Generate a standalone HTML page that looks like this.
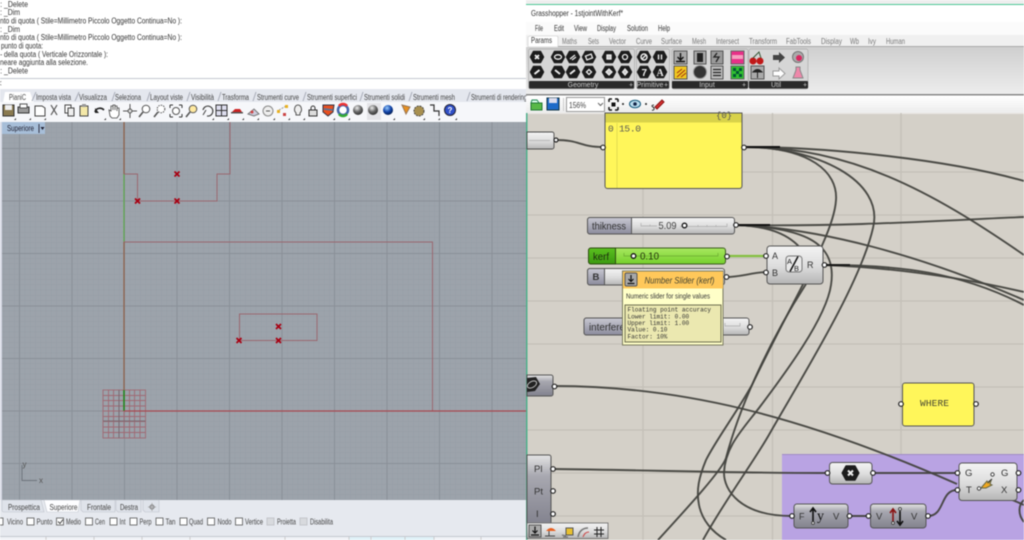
<!DOCTYPE html>
<html><head><meta charset="utf-8"><style>
html,body{margin:0;padding:0;width:1024px;height:540px;overflow:hidden;background:#fff}
svg{display:block;position:absolute;left:0;top:0;filter:blur(.45px)}
text{font-family:"Liberation Sans",sans-serif}
.c{font-size:8px;fill:#333}.t{font-size:8px;fill:#444}.m{font-family:"Liberation Mono",monospace;fill:#333}
.w{fill:none;stroke:#43433f;stroke-width:1.9;stroke-opacity:.95}
.p{fill:#fff;stroke:#222;stroke-width:1.2}
.n{stroke:#4a4a4a;stroke-width:.9}
.r{fill:none;stroke:#9a6870;stroke-width:1}
.g{font-size:10.5px;fill:#333}
</style></head><body>
<svg width="1024" height="540" viewBox="0 0 1024 540" xmlns="http://www.w3.org/2000/svg">
<defs>
<linearGradient id="cg" x1="0" y1="0" x2="0" y2="1"><stop offset="0" stop-color="#f4f4f4"/><stop offset=".55" stop-color="#dcdcdc"/><stop offset="1" stop-color="#b5b5b5"/></linearGradient>
<linearGradient id="dg" x1="0" y1="0" x2="0" y2="1"><stop offset="0" stop-color="#e4e4e4"/><stop offset=".3" stop-color="#a8a8b0"/><stop offset="1" stop-color="#82828e"/></linearGradient>
<linearGradient id="lg" x1="0" y1="0" x2="0" y2="1"><stop offset="0" stop-color="#c8c8d2"/><stop offset="1" stop-color="#8c8c9c"/></linearGradient>
<linearGradient id="gg" x1="0" y1="0" x2="0" y2="1"><stop offset="0" stop-color="#a8e860"/><stop offset="1" stop-color="#76d02c"/></linearGradient>
<linearGradient id="gd" x1="0" y1="0" x2="0" y2="1"><stop offset="0" stop-color="#5cc020"/><stop offset="1" stop-color="#3c9a10"/></linearGradient>
<linearGradient id="pal" x1="0" y1="0" x2="0" y2="1"><stop offset="0" stop-color="#cfcfcf"/><stop offset="1" stop-color="#ededed"/></linearGradient>
<linearGradient id="tb" x1="0" y1="0" x2="0" y2="1"><stop offset="0" stop-color="#fff"/><stop offset="1" stop-color="#ececec"/></linearGradient>
<radialGradient id="sph" cx=".4" cy=".3" r=".8"><stop offset="0" stop-color="#eee"/><stop offset=".5" stop-color="#666"/><stop offset="1" stop-color="#222"/></radialGradient>
<radialGradient id="blu" cx=".4" cy=".3" r=".8"><stop offset="0" stop-color="#9cf"/><stop offset=".5" stop-color="#14a"/><stop offset="1" stop-color="#013"/></radialGradient>
<pattern id="mi" width="5.25" height="5.25" patternUnits="userSpaceOnUse" x="19.5" y="253"><path d="M0 0V5.25M0 0H5.25" stroke="#959ca4" stroke-width=".7" fill="none"/></pattern>
<pattern id="ma" width="52.5" height="52.5" patternUnits="userSpaceOnUse" x="19" y="253"><path d="M.5 0V52.5M0 .5H52.5" stroke="#8a9098" stroke-width="1" fill="none"/></pattern>
<g id="hx"><polygon points="-6.5,0 -3.5,-5.5 3.5,-5.5 6.5,0 3.5,5.5 -3.5,5.5" fill="#1c1c1c" stroke="#1c1c1c" stroke-width="1.4" stroke-linejoin="round"/></g>
<g id="x"><path d="M-2.5 -2.500L2.500 2.500M2.500 -2.500L-2.500 2.500" stroke="#a80012" stroke-width="1.700"/></g>
</defs>

<!-- LEFT: command area -->
<rect width="526" height="90" fill="#fff"/>
<g class="c">
<text class="c" x="-4" y="7" textLength="32" lengthAdjust="spacingAndGlyphs">&lt;: _Delete</text>
<text class="c" x="-4" y="15" textLength="24" lengthAdjust="spacingAndGlyphs">&lt;: _Dim</text>
<text class="c" x="0" y="23.5" textLength="182" lengthAdjust="spacingAndGlyphs">nto di quota ( Stile=Millimetro Piccolo  Oggetto  Continua=No ):</text>
<text class="c" x="-4" y="32" textLength="24" lengthAdjust="spacingAndGlyphs">&lt;: _Dim</text>
<text class="c" x="0" y="40" textLength="182" lengthAdjust="spacingAndGlyphs">nto di quota ( Stile=Millimetro Piccolo  Oggetto  Continua=No ):</text>
<text class="c" x="1" y="48.5" textLength="42" lengthAdjust="spacingAndGlyphs">punto di quota:</text>
<text class="c" x="0" y="57" textLength="108" lengthAdjust="spacingAndGlyphs">- della quota ( Verticale  Orizzontale ):</text>
<text class="c" x="0" y="65" textLength="88" lengthAdjust="spacingAndGlyphs">neare aggiunta alla selezione.</text>
<text class="c" x="-4" y="73.5" textLength="32" lengthAdjust="spacingAndGlyphs">&lt;: _Delete</text>
<text class="c" x="-3" y="86">&lt;</text>
</g>
<rect y="78" width="526" height="1" fill="#c4c8d0"/>
<rect y="89" width="526" height="14" fill="#e4e7ee"/>
<path d="M3 103L5 92H30L34 103Z" fill="#fff"/>
<g class="t">
<text class="t" x="9" y="100" textLength="17" lengthAdjust="spacingAndGlyphs">PianiC</text>
<text class="t" x="36" y="100" textLength="35" lengthAdjust="spacingAndGlyphs">Imposta vista</text>
<text class="t" x="79" y="100" textLength="28" lengthAdjust="spacingAndGlyphs">Visualizza</text>
<text class="t" x="115" y="100" textLength="26" lengthAdjust="spacingAndGlyphs">Seleziona</text>
<text class="t" x="150" y="100" textLength="33" lengthAdjust="spacingAndGlyphs">Layout viste</text>
<text class="t" x="191" y="100" textLength="23" lengthAdjust="spacingAndGlyphs">Visibilità</text>
<text class="t" x="222" y="100" textLength="27" lengthAdjust="spacingAndGlyphs">Trasforma</text>
<text class="t" x="257" y="100" textLength="42" lengthAdjust="spacingAndGlyphs">Strumenti curve</text>
<text class="t" x="307" y="100" textLength="50" lengthAdjust="spacingAndGlyphs">Strumenti superfici</text>
<text class="t" x="364" y="100" textLength="41" lengthAdjust="spacingAndGlyphs">Strumenti solidi</text>
<text class="t" x="413" y="100" textLength="42" lengthAdjust="spacingAndGlyphs">Strumenti mesh</text>
<text class="t" x="471" y="100" textLength="56" lengthAdjust="spacingAndGlyphs">Strumenti di rendering</text>
</g>
<path d="M32 101l4-9M75 101l4-9M112 101l3-9M147 101l3-9M187 101l3-9M218 101l3-9M253 101l3-9M303 101l3-9M360 101l3-9M409 101l3-9M467 101l3-9" stroke="#a8acb8" fill="none"/>
<rect y="102" width="526" height="20" fill="#f6f7fa"/>
<!-- rhino toolbar icons -->
<g>
<rect x="3" y="105" width="11" height="11" fill="#8a7a50" stroke="#333"/><rect x="5" y="105" width="7" height="5" fill="#eee"/>
<rect x="18" y="107" width="11" height="6" fill="#999" stroke="#333"/><rect x="20" y="104" width="7" height="4" fill="#fff" stroke="#555"/>
<path d="M35 106h7l3 2v8h-10z" fill="#fff" stroke="#444"/>
<path d="M51 105l6 10M57 105l-6 10" stroke="#555" stroke-width="1.200"/>
<rect x="65" y="105" width="6" height="8" fill="#fff" stroke="#444"/><rect x="68" y="108" width="6" height="8" fill="#eee" stroke="#444"/>
<rect x="80" y="106" width="8" height="10" fill="#f4e8a8" stroke="#444"/><rect x="82" y="104" width="4" height="3" fill="#999"/>
<path d="M95 112c1-4 6-5 9-2" fill="none" stroke="#222" stroke-width="1.600"/><path d="M95 108v5h4z" fill="#222"/>
<path d="M110 116l-1-6 2 1v-5h2v4 -5h2v5 -4h2v5 -3h2v7l-2 3h-5z" fill="#fff" stroke="#444" stroke-width=".8"/>
<path d="M130 104v14M123 111h14" stroke="#555"/><circle cx="130" cy="111" r="2" fill="#ddd" stroke="#555"/>
<circle cx="146" cy="109" r="3.800" fill="#fff" stroke="#555"/><path d="M143 112l-4 5" stroke="#555" stroke-width="1.600"/>
<circle cx="161" cy="109" r="3.800" fill="#fff" stroke="#555" stroke-dasharray="1.500 1"/><path d="M158 112l-4 5" stroke="#555" stroke-width="1.600"/>
<path d="M170 105h3M170 105v3M182 105h-3M182 105v3M170 117h3M170 117v-3M182 117h-3M182 117v-3" stroke="#333" fill="none"/><circle cx="176" cy="111" r="3.500" fill="#fff" stroke="#555"/>
<circle cx="193" cy="109" r="3.800" fill="#ffe9a0" stroke="#555"/><path d="M190 112l-4 5" stroke="#555" stroke-width="1.600"/>
<path d="M203 110a5 5 0 1 1 4 6" fill="none" stroke="#444" stroke-width="1.200"/><path d="M203 115l3-5" stroke="#444"/>
<rect x="216" y="105" width="11" height="11" fill="#dde" stroke="#333"/><path d="M221.500 105v11M216 110.500h11" stroke="#333"/>
<path d="M232 112h10l-2-3h-5z" fill="#c22"/><rect x="231" y="112" width="12" height="1.500" fill="#555"/>
<path d="M248 114l6-5 5 5-5 2z" fill="#ccd" stroke="#777"/><circle cx="252" cy="112" r="1.500" fill="#c44"/>
<circle cx="268" cy="111" r="5" fill="#eee" stroke="#888"/><path d="M266 111h4" stroke="#555"/>
<path d="M279 110l7-4" stroke="#999" stroke-dasharray="2 1"/><rect x="277" y="110" width="3" height="3" fill="#e8b020"/><rect x="285" y="105" width="3" height="3" fill="#e8b020"/><rect x="283" y="113" width="3" height="3" fill="#c44"/>
<path d="M296 115v-2c-3-3-1-8 2-8s5 5 2 8v2z" fill="#eee" stroke="#555"/>
<rect x="309" y="110" width="8" height="6" fill="#ddd" stroke="#333"/><path d="M311 110v-2a2 2 0 0 1 4 0v2" fill="none" stroke="#333"/>
<path d="M323 105h11l-1 7-5 4-5-4z" fill="#e85020" stroke="#334"/><path d="M324 109l9 1" stroke="#47a" stroke-width="1.500"/>
<circle cx="343" cy="110" r="5" fill="#fff" stroke="#46a" stroke-width="2.500"/><path d="M339 106a5 5 0 0 1 8 0" stroke="#e33" stroke-width="2.500" fill="none"/><path d="M339 114a5 5 0 0 0 8 0" stroke="#3a3" stroke-width="2.500" fill="none"/>
<circle cx="358" cy="110" r="5" fill="url(#sph)"/>
<rect x="367" y="103" width="14" height="17" fill="#e4e4e8"/><circle cx="373" cy="110" r="5" fill="url(#sph)"/>
<circle cx="388" cy="110" r="5" fill="url(#blu)"/>
<path d="M402 105l8 2-4 7z" fill="#e89020" stroke="#975"/>
<circle cx="419" cy="111" r="5" fill="#a89050" stroke="#444" stroke-dasharray="2 1"/>
<path d="M430 105h4v6h5v5" fill="none" stroke="#333" stroke-width="1.200"/>
<circle cx="450" cy="110" r="5.500" fill="#3050c8" stroke="#223"/><text x="447.500" y="113" style="font-size:8px;fill:#fff;font-weight:bold">?</text>
</g>
<path d="M16 118l-2 2h2zM31 118l-2 2h2zM46 118l-2 2h2zM106 118l-2 2h2zM121 118l-2 2h2zM214 118l-2 2h2zM229 118l-2 2h2zM244 118l-2 2h2zM259 118l-2 2h2zM275 118l-2 2h2zM290 118l-2 2h2zM305 118l-2 2h2zM335 118l-2 2h2zM350 118l-2 2h2zM395 118l-2 2h2zM425 118l-2 2h2zM440 118l-2 2h2zM457 118l-2 2h2z" fill="#333"/>

<!-- viewport -->
<rect x="0" y="122" width="526" height="378" fill="#9ca3ab"/>
<rect x="0" y="122" width="526" height="378" fill="url(#mi)"/>
<rect x="0" y="122" width="526" height="378" fill="url(#ma)"/>
<rect x="0" y="122" width="2" height="378" fill="#d8dbe6"/>
<rect x="2" y="122" width="43" height="12" fill="#a7bed8"/>
<text x="7" y="131" textLength="27" lengthAdjust="spacingAndGlyphs" style="font-size:8px;fill:#223">Superiore</text>
<rect x="38.500" y="124" width="1" height="9" fill="#334"/><path d="M40.500 127h4l-2 3z" fill="#223"/>
<!-- model -->
<path d="M124 174V242" stroke="#5ca84c" stroke-width="1.200" fill="none"/>
<path d="M124 122V174" stroke="#8f6048" stroke-width="1.200" fill="none"/>
<path class="r" d="M124 174H137.500V201H217V174H230V122"/>
<rect x="124" y="242" width="308.500" height="169" class="r"/>
<path d="M124 242V411" stroke="#8f6048" stroke-width="1.200"/>
<path class="r" d="M239.500 340.500V314H317V340.500Z" stroke-width="1.200"/>
<g stroke="#a06a74" fill="none" stroke-width=".9">
<rect x="103" y="390" width="42.500" height="48"/>
<path d="M108.500 390v48M113.500 390v48M119 390v48M124 390v48M129.500 390v48M134.500 390v48M140 390v48M103 395.500h42.500M103 400.500h42.500M103 406h42.500M103 411h42.500M103 416.500h42.500M103 421.500h42.500M103 427h42.500M103 432.500h42.500"/>
</g>
<path d="M119 390v48M103 421h42.500" stroke="#7a6870" stroke-width="1" fill="none"/>
<path d="M124 390V411" stroke="#1c8a1c" stroke-width="1.500"/>
<path d="M124 411H526" stroke="#a84850" stroke-width="1.200"/>
<use href="#x" x="177" y="174"/><use href="#x" x="137.500" y="201"/><use href="#x" x="177" y="201"/>
<use href="#x" x="278.500" y="326.500"/><use href="#x" x="239" y="340.500"/><use href="#x" x="278.500" y="340.500"/>
<path d="M22 465V480.500H37" stroke="#6e747c" fill="none"/>
<text x="22.500" y="467" style="font-size:8px;fill:#555">y</text><text x="39" y="483" style="font-size:8px;fill:#555">x</text>

<!-- bottom tabs + osnaps -->
<rect y="500" width="526" height="40" fill="#e6e9ef"/>
<path d="M2 500v10q0 2 2 2H40l4 0 -3-12z" fill="#dfe3ea" stroke="#c0c4cc" stroke-width=".6"/>
<path d="M44 500l3 12H78l2-12z" fill="#fdfdff" stroke="#c4c8d0" stroke-width=".6"/>
<path d="M81 500v10l2 2h32v-12zM116 500v10l2 2h23v-12zM143 500v10l2 2h14v-12z" fill="#dfe3ea" stroke="#c0c4cc" stroke-width=".6"/>
<g style="font-size:8px">
<text class="t" x="8" y="510" textLength="32" lengthAdjust="spacingAndGlyphs">Prospettica</text>
<text class="t" x="49.500" y="510" textLength="28" lengthAdjust="spacingAndGlyphs">Superiore</text>
<text class="t" x="87" y="510" textLength="24" lengthAdjust="spacingAndGlyphs">Frontale</text>
<text class="t" x="120" y="510" textLength="18" lengthAdjust="spacingAndGlyphs">Destra</text>
</g>
<circle cx="152" cy="507" r="2" fill="none" stroke="#777"/><path d="M152 503v8M148 507h8" stroke="#999" stroke-width=".7"/>
<g fill="#fff" stroke="#555" stroke-width=".8">
<rect x="-4" y="518" width="7" height="7"/><rect x="27" y="518" width="7" height="7"/><rect x="56.500" y="518" width="7" height="7"/><rect x="85.500" y="518" width="7" height="7"/><rect x="110" y="518" width="7" height="7"/><rect x="130" y="518" width="7" height="7"/><rect x="156" y="518" width="7" height="7"/><rect x="180" y="518" width="7" height="7"/><rect x="207.500" y="518" width="7" height="7"/><rect x="235.500" y="518" width="7" height="7"/>
</g>
<rect x="267" y="518" width="7" height="7" fill="#d8dade" stroke="#c4c6ca"/><rect x="300" y="518" width="7" height="7" fill="#d8dade" stroke="#c4c6ca"/>
<path d="M58 521.500l2 2 3-4" fill="none" stroke="#444"/>
<g style="font-size:8px">
<text class="t" x="7" y="524.500" textLength="16" lengthAdjust="spacingAndGlyphs">Vicino</text>
<text class="t" x="36.500" y="524.500" textLength="16" lengthAdjust="spacingAndGlyphs">Punto</text>
<text class="t" x="66" y="524.500" textLength="15" lengthAdjust="spacingAndGlyphs">Medio</text>
<text class="t" x="95" y="524.500" textLength="10" lengthAdjust="spacingAndGlyphs">Cen</text>
<text class="t" x="119.500" y="524.500" textLength="6" lengthAdjust="spacingAndGlyphs">Int</text>
<text class="t" x="139.500" y="524.500" textLength="12" lengthAdjust="spacingAndGlyphs">Perp</text>
<text class="t" x="165.500" y="524.500" textLength="10" lengthAdjust="spacingAndGlyphs">Tan</text>
<text class="t" x="189" y="524.500" textLength="14" lengthAdjust="spacingAndGlyphs">Quad</text>
<text class="t" x="217.500" y="524.500" textLength="14" lengthAdjust="spacingAndGlyphs">Nodo</text>
<text class="t" x="245" y="524.500" textLength="18" lengthAdjust="spacingAndGlyphs">Vertice</text>
<text class="t" x="277" y="524.500" textLength="19" lengthAdjust="spacingAndGlyphs">Proietta</text>
<text class="t" x="310" y="524.500" textLength="23" lengthAdjust="spacingAndGlyphs">Disabilita</text>
</g>
<rect y="536" width="526" height="1" fill="#c4c8d0"/><rect y="537" width="526" height="3" fill="#f0f2f6"/>
<rect x="349" y="537" width="22" height="3" fill="#e0f2f8"/><rect x="372" y="537" width="33" height="3" fill="#e0f2f8"/><rect x="405" y="537" width="29" height="3" fill="#e0f2f8"/>
<path d="M46 537v3M94 537v3M142 537v3M190 537v3M285 537v3M349 537v3M371 537v3M405 537v3M434 537v3M481 537v3" stroke="#ccc"/>

<!-- GH window -->
<rect x="526" y="0" width="498" height="5" fill="#eeeeee"/>
<rect x="526" y="4" width="498" height="1" fill="#4ec795"/>
<rect x="526" y="5" width="498" height="17" fill="#fff"/>
<rect x="526" y="22" width="498" height="13" fill="#fbfbfb"/>
<rect x="526" y="35" width="498" height="11" fill="#f0f0f0"/>
<text x="531" y="16" textLength="92" lengthAdjust="spacingAndGlyphs" style="font-size:8px;fill:#333">Grasshopper - 1stjointWithKerf*</text>
<g style="font-size:8px;fill:#333">
<text x="535" y="31" textLength="8" lengthAdjust="spacingAndGlyphs">File</text>
<text x="554" y="31" textLength="10" lengthAdjust="spacingAndGlyphs">Edit</text>
<text x="574" y="31" textLength="13" lengthAdjust="spacingAndGlyphs">View</text>
<text x="597" y="31" textLength="19" lengthAdjust="spacingAndGlyphs">Display</text>
<text x="627" y="31" textLength="21" lengthAdjust="spacingAndGlyphs">Solution</text>
<text x="658" y="31" textLength="12" lengthAdjust="spacingAndGlyphs">Help</text>
</g>
<path d="M528 47v-10l2-1h27l1 1v10z" fill="#fff" stroke="#ccc" stroke-width=".6"/>
<text x="531" y="43" textLength="21" lengthAdjust="spacingAndGlyphs" style="font-size:8px;fill:#333">Params</text>
<g style="font-size:8px;fill:#777">
<text x="562" y="44" textLength="15" lengthAdjust="spacingAndGlyphs">Maths</text>
<text x="588" y="44" textLength="11" lengthAdjust="spacingAndGlyphs">Sets</text>
<text x="609" y="44" textLength="17" lengthAdjust="spacingAndGlyphs">Vector</text>
<text x="636" y="44" textLength="16" lengthAdjust="spacingAndGlyphs">Curve</text>
<text x="661" y="44" textLength="21" lengthAdjust="spacingAndGlyphs">Surface</text>
<text x="692" y="44" textLength="14" lengthAdjust="spacingAndGlyphs">Mesh</text>
<text x="716" y="44" textLength="23" lengthAdjust="spacingAndGlyphs">Intersect</text>
<text x="749" y="44" textLength="28" lengthAdjust="spacingAndGlyphs">Transform</text>
<text x="786" y="44" textLength="25" lengthAdjust="spacingAndGlyphs">FabTools</text>
<text x="821" y="44" textLength="21" lengthAdjust="spacingAndGlyphs">Display</text>
<text x="850" y="44" textLength="9" lengthAdjust="spacingAndGlyphs">Wb</text>
<text x="868" y="44" textLength="8" lengthAdjust="spacingAndGlyphs">Ivy</text>
<text x="886" y="44" textLength="19" lengthAdjust="spacingAndGlyphs">Human</text>
</g>
<rect x="558" y="46" width="466" height="1" fill="#aaa"/>
<rect x="526" y="47" width="498" height="47" fill="url(#pal)"/>
<rect x="526" y="94" width="498" height="1.500" fill="#888"/>
<rect x="526" y="96" width="498" height="17" fill="url(#tb)"/>
<!-- palette groups -->
<g fill="#d6d6d6" stroke="#aaa" stroke-width=".7">
<rect x="528.500" y="49" width="106" height="40" rx="2"/><rect x="636.500" y="49" width="33" height="40" rx="2"/><rect x="672" y="49" width="76" height="40" rx="2"/><rect x="749" y="49" width="59" height="40" rx="2"/>
</g>
<g fill="#2a2a2a"><rect x="529" y="81" width="105" height="7.500" rx="1"/><rect x="637" y="81" width="32" height="7.500" rx="1"/><rect x="672" y="81" width="76" height="7.500" rx="1"/><rect x="749" y="81" width="59" height="7.500" rx="1"/></g>
<g style="font-size:7px;fill:#ccc" text-anchor="middle">
<text x="583" y="87">Geometry</text><text x="650" y="87">Primitive</text><text x="707" y="87">Input</text><text x="776" y="87">Util</text>
<text x="631" y="87">+</text><text x="666" y="87">+</text><text x="744" y="87">+</text><text x="805" y="87">+</text>
</g>
<g>
<use href="#hx" x="537" y="57"/><use href="#hx" x="537" y="72"/>
<use href="#hx" x="558" y="57"/><use href="#hx" x="558" y="72"/><use href="#hx" x="573" y="57"/><use href="#hx" x="573" y="72"/><use href="#hx" x="589" y="57"/><use href="#hx" x="589" y="72"/>
<use href="#hx" x="609" y="57"/><use href="#hx" x="609" y="72"/><use href="#hx" x="625" y="57"/><use href="#hx" x="625" y="72"/>
<use href="#hx" x="644" y="57"/><use href="#hx" x="644" y="72"/><use href="#hx" x="660" y="57"/><use href="#hx" x="660" y="72"/>
</g>
<g fill="none" stroke="#eee" stroke-width="1.300">
<path d="M535 55l4 4M539 55l-4 4" stroke-width="1.800"/><path d="M534.500 74l5-4" stroke-width="2"/>
<ellipse cx="558" cy="57" rx="3.500" ry="2.200"/><path d="M555 70l5 4" stroke-width="1.800"/>
<path d="M570 59l5-4M572 60l4-3"/><path d="M570 74l5-4" stroke-width="1.800"/>
<rect x="586" y="55" width="6" height="4" transform="rotate(-20 589 57)"/><path d="M586.500 72l2.500-2.500 2.500 2.500-2.500 2.500z"/>
<rect x="607" y="55" width="4" height="4" fill="#ccc"/><path d="M606 72l3-3 3 3-3 3z" fill="#ccc"/>
<circle cx="625" cy="57" r="2.500"/><path d="M622.500 72l2.500-3 2.500 3-2.500 3z" fill="#ccc"/>
<circle cx="644" cy="57" r="3" stroke-width="1.500"/><path d="M642 59l4-4"/>
<path d="M658.500 54.500v5M661.500 54.500v5" stroke-width="1.400"/>
</g>
<text x="641.500" y="76" style="font-size:10px;fill:#eee;font-weight:bold">7</text>
<text x="656.500" y="76" style="font-size:10px;fill:#eee;font-weight:bold;font-family:'Liberation Serif',serif">A</text>
<!-- input icons -->
<rect x="674" y="51" width="13" height="13" fill="#aaa" stroke="#555"/><path d="M680.500 53v6M677.500 57l3 3 3-3M676 61.500h9" stroke="#111" stroke-width="1.400" fill="none"/>
<rect x="674" y="66" width="13" height="13" fill="#f0c820" stroke="#555"/><path d="M677 77l8-7M677 73l5-4M681 77l5-4" stroke="#a03010" fill="none"/>
<rect x="694" y="51" width="12" height="13" fill="#aaa" stroke="#555"/><rect x="697" y="53" width="6" height="9" fill="#222"/>
<rect x="711" y="51" width="12" height="13" fill="#999" stroke="#555"/><path d="M717 53l-3 4h5l-3 5" stroke="#222" fill="none" stroke-width="1.300"/>
<circle cx="700" cy="72" r="6.500" fill="#333" stroke="#999"/>
<rect x="711" y="66" width="12" height="13" fill="#bbb" stroke="#555"/><path d="M713 69.500h8M713 72.500h8M713 75.500h8" stroke="#222" stroke-width="1.300"/>
<rect x="731" y="51" width="13" height="13" fill="#e83088" stroke="#666"/><rect x="732" y="55" width="11" height="4" fill="#f5a0c0"/>
<rect x="731" y="66" width="13" height="13" fill="#30c030" stroke="#666"/><path d="M733 68h3v3h-3zM739 68h3v3h-3zM736 71h3v3h-3zM733 74h3v3h-3zM739 74h3v3h-3z" fill="#053"/>
<!-- util icons -->
<circle cx="753" cy="61" r="3.500" fill="#c01818"/><circle cx="760" cy="61" r="3.500" fill="#c01818"/><path d="M753 58l6-6 2 6" stroke="#353" fill="none"/>
<rect x="751" y="66" width="13" height="13" fill="#aaa" stroke="#555"/><path d="M757.500 78v-6M753 72q4.500-5 9 0z" fill="#222" stroke="#222"/>
<path d="M773 55h6v-3l6 5.500-6 5.500v-3h-6z" fill="#444"/><path d="M773 71h6v-3l6 5.500-6 5.500v-3h-6z" fill="#fff" stroke="#999"/>
<circle cx="798" cy="57" r="5.500" fill="#aaa" stroke="#777"/><circle cx="799" cy="58" r="3" fill="#d82860"/>
<path d="M796 67h4v3l3 8h-10l3-8z" fill="#ee88aa" stroke="#888"/>
<!-- gh toolbar -->
<path d="M532 100h5l2 3h-8z" fill="#dfe" stroke="#285"/><rect x="531" y="103" width="11" height="7" fill="#58b848" stroke="#273"/>
<rect x="547" y="98" width="12" height="12" fill="#1e6ac8" stroke="#134"/><rect x="549" y="98" width="8" height="5" fill="#dde"/>
<path d="M563.500 98v13" stroke="#ccc"/>
<rect x="566.500" y="97.500" width="38" height="14" fill="#fff" stroke="#999"/>
<text x="569" y="108" textLength="17" lengthAdjust="spacingAndGlyphs" style="font-size:8.500px;fill:#444">156%</text>
<path d="M598 103l2.500 2.500 2.500-2.500" fill="none" stroke="#666"/>
<path d="M609 99h3M615 99h3M609 99v3M618 99v3M609 110h3M615 110h3M609 110v-3M618 110v-3" stroke="#111" stroke-width="1.500" fill="none"/><rect x="611.500" y="102.500" width="4" height="4" fill="#111"/>
<circle cx="623" cy="104" r="1" fill="#222"/>
<ellipse cx="635" cy="104" rx="5.500" ry="3.800" fill="#bde" stroke="#157"/><circle cx="635" cy="104" r="1.800" fill="#124"/>
<circle cx="646" cy="104" r="1" fill="#222"/>
<path d="M652 110c2 1 3-2 1-3s-1-2 1-2" fill="none" stroke="#333"/><path d="M655 107l7-7 2 2-7 7z" fill="#d83030" stroke="#811"/>

<!-- canvas -->
<rect x="526" y="113" width="498" height="427" fill="#d4d0c8"/>
<rect x="526" y="113" width="498" height="1" fill="#e8e6e2"/>
<g stroke="#c4c0b8" stroke-width="1.300">
<path d="M526 172H1024M526 215H1024M526 258H1024M526 301H1024M526 344H1024M526 387H1024M526 430H1024M526 473H1024M526 516H1024"/>
<path d="M643 113V540M772.500 113V540M901 113V540"/>
</g>
<rect x="526" y="113" width="1.500" height="427" fill="#4fb08c"/>
<rect x="782" y="454" width="242" height="86" fill="#b9a3e3"/>
<rect x="782" y="454" width="242" height="1" fill="#a08cc4"/>

<!-- wires behind -->
<g class="w">
<path d="M556 140C580 140 580 147 603 147"/>
<path d="M744 147C830 147 950 160 1024 181"/>
<path d="M744 147C850 147 930 190 1024 255"/>
<path d="M744 147C810 147 838 172 836 200C834 235 795 295 752 385C735 415 716 440 706 460C699 477 696 490 699 505C702 520 712 532 726 540"/>
<path d="M744 147C815 147 885 180 873 228C860 285 800 380 770 433C755 460 725 500 703 540"/>
<path d="M806 284C770 340 740 405 726 458C722 470 690 505 658 540"/>
<path d="M736 225C800 228 838 240 831 285C826 320 780 380 759 408C742 430 725 447 724 473C724 490 740 516 792 516"/>
<path d="M736 225C770 226 790 235 802 250"/>
<path d="M736 225C850 227 950 220 1024 217"/>
<path d="M736 225C820 228 920 255 1024 300"/>
<path d="M824 265C900 265 960 272 1024 305"/>
<path d="M824 265C880 267 950 275 1024 292"/>
<path d="M554 386C680 386 800 415 957 484"/>
<path d="M553 469C650 470 720 473 827 473"/>
<path d="M873 473H957"/>
<path d="M849 516H868"/>
<path d="M928 516C945 516 940 490 957 490"/>
<path d="M1009 499C1016 501 1019 503 1024 505"/>
<path d="M1024 500C1018 505 1018 515 1024 522"/>
<path d="M726 277C740 277 750 273 766 272"/>
</g>
<path d="M736 225H770" stroke="#111" stroke-width="2" fill="none"/>
<path d="M744 147H780" stroke="#111" stroke-width="2" fill="none"/>
<path d="M728 256H766" stroke="#84c040" stroke-width="2.200"/>

<!-- left cut slider -->
<path d="M527 132h25a2 2 0 0 1 2 2v13a2 2 0 0 1-2 2h-25z" fill="url(#cg)" class="n"/>
<path d="M529 140.500h21" stroke="#aaa" stroke-width=".7"/>
<circle class="p" cx="556" cy="140" r="2"/>

<!-- yellow panel -->
<path d="M605 113H742V186a2.500 2.500 0 0 1-2.500 2.500H607.500a2.500 2.500 0 0 1-2.500-2.500Z" fill="#fff65a" stroke="#555" stroke-width="1"/>
<rect x="605.500" y="113.500" width="136" height="9" fill="#d8d24a"/>
<path d="M617 123V188" stroke="#e2dc50" stroke-width="1"/>
<text class="m" x="716" y="118" style="font-size:9px;fill:#555">{0}</text>
<text class="m" x="608" y="131.500" style="font-size:9.500px;fill:#555">0</text>
<text class="m" x="619" y="131.500" textLength="22" lengthAdjust="spacing" style="font-size:9.500px;fill:#555">15.0</text>
<circle class="p" cx="603" cy="147.500" r="2.300"/><circle class="p" cx="744" cy="147.500" r="2.300"/>

<!-- thikness -->
<rect x="587.500" y="217.500" width="147" height="16.500" rx="2.500" fill="url(#cg)" stroke="#555"/>
<path d="M590 217.500h41.500v16.500H590a2.500 2.500 0 0 1-2.500-2.500v-11.500a2.500 2.500 0 0 1 2.500-2.500z" fill="url(#lg)" stroke="#555"/>
<text x="592" y="229.500" textLength="34" lengthAdjust="spacingAndGlyphs" class="g">thikness</text>
<path d="M641 223v3H657M680 226.500H727v-3M650 224.500v1.500M698 225v1.500M707 225v1.500M716 225v1.500" stroke="#aaa" stroke-width=".7" fill="none"/>
<text x="658.500" y="229" textLength="18" lengthAdjust="spacingAndGlyphs" style="font-size:10.500px;fill:#444">5.09</text>
<circle cx="684.500" cy="225.500" r="2.300" fill="#fff" stroke="#111" stroke-width="1.300"/>
<circle class="p" cx="736" cy="225" r="2.300"/>

<!-- kerf -->
<rect x="588.500" y="248" width="137" height="16" rx="2.500" fill="url(#gg)" stroke="#3c5c20"/>
<path d="M591 248h24.500v16H591a2.500 2.500 0 0 1-2.500-2.500v-11a2.500 2.500 0 0 1 2.500-2.500z" fill="url(#gd)" stroke="#2c4c10"/>
<text x="593" y="260" textLength="16" lengthAdjust="spacingAndGlyphs" class="g" style="fill:#1c2c10">kerf</text>
<path d="M624 253v3H718v-3" stroke="#6aa830" stroke-width=".7" fill="none"/>
<circle cx="633.500" cy="256" r="2.300" fill="#fff" stroke="#111" stroke-width="1.300"/>
<text x="640" y="259.500" textLength="19" lengthAdjust="spacingAndGlyphs" style="font-size:10.500px;fill:#24340c">0.10</text>
<circle class="p" cx="727" cy="256.500" r="2.300"/>

<!-- B -->
<rect x="587.500" y="268.500" width="137" height="16.500" rx="2.500" fill="url(#cg)" stroke="#555"/>
<path d="M590 268.500h14.500v16.500H590a2.500 2.500 0 0 1-2.500-2.500v-11.500a2.500 2.500 0 0 1 2.500-2.500z" fill="url(#lg)" stroke="#555"/>
<text x="592.500" y="280" style="font-size:9.500px;fill:#333;font-weight:bold">B</text>
<circle class="p" cx="726.500" cy="277" r="2.300"/>

<!-- interfere -->
<rect x="584" y="318" width="165" height="17" rx="2.500" fill="url(#cg)" stroke="#555"/>
<path d="M586.500 318h40v17h-40a2.500 2.500 0 0 1-2.500-2.500v-12a2.500 2.500 0 0 1 2.500-2.500z" fill="url(#lg)" stroke="#555"/>
<text x="589" y="330.500" textLength="36" lengthAdjust="spacingAndGlyphs" class="g">interfere</text>
<path d="M725 323v3H740v-3" stroke="#aaa" stroke-width=".7" fill="none"/>
<circle class="p" cx="750" cy="327" r="2.300"/>

<!-- tooltip -->
<rect x="622.500" y="271" width="100.500" height="74" fill="#ffffc8" stroke="#7a7a60"/>
<rect x="623" y="271.500" width="100" height="17" fill="#ffc85a"/>
<rect x="625" y="273" width="12" height="13" rx="1.500" fill="#a8a8a8" stroke="#555"/>
<path d="M631 275v6M628.500 279l2.500 2.500 2.500-2.500M627.500 283.500h7" stroke="#111" stroke-width="1.200" fill="none"/>
<text x="644.500" y="283.500" textLength="70" lengthAdjust="spacingAndGlyphs" style="font-size:9px;fill:#443;font-style:italic">Number Slider (kerf)</text>
<text x="626" y="298.500" textLength="84" lengthAdjust="spacingAndGlyphs" style="font-size:7.500px;fill:#333">Numeric slider for single values</text>
<rect x="625" y="305" width="96" height="37" fill="#ebe8b0" stroke="#6e6e50"/>
<g style="font-size:6.050px;fill:#333">
<text x="627.500" y="311.500" class="m">Floating point accuracy</text>
<text x="627.500" y="318.300" class="m">Lower limit: 0.00</text>
<text x="627.500" y="325" class="m">Upper limit: 1.00</text>
<text x="627.500" y="331.700" class="m">Value: 0.10</text>
<text x="627.500" y="338.300" class="m">Factor: 10%</text>
</g>

<!-- A/B -->
<rect x="767" y="246" width="56" height="38" rx="3" fill="url(#cg)" stroke="#555"/>
<text x="772" y="259" style="font-size:9px;fill:#333">A</text><text x="772" y="276" style="font-size:9px;fill:#333">B</text>
<text x="807" y="268" style="font-size:9px;fill:#333">R</text>
<rect x="786" y="256" width="16" height="16" rx="3" fill="#e8e8e8" stroke="#777"/>
<text x="787" y="264" style="font-size:7.500px;fill:#222">A</text><text x="794" y="271" style="font-size:7.500px;fill:#222">B</text>
<path d="M790 271.500L798 256.500" stroke="#111" stroke-width="1.500"/>
<circle class="p" cx="766" cy="256" r="2.300"/><circle class="p" cx="766" cy="272.500" r="2.300"/><circle class="p" cx="824.500" cy="265" r="2.300"/>
<path d="M826 265H850" stroke="#111" stroke-width="1.800"/>

<!-- cut comp left -->
<path d="M527 375h24a2 2 0 0 1 2 2v17a2 2 0 0 1-2 2h-24z" fill="url(#dg)" stroke="#555"/>
<path d="M527 378l9-1 4 7-5 7-8 1z" fill="#222"/><ellipse cx="532" cy="384.500" rx="5" ry="3" fill="none" stroke="#bbb" transform="rotate(-30 532 384.500)"/>
<circle class="p" cx="554.500" cy="386.500" r="2.300"/>

<!-- WHERE -->
<rect x="902.500" y="383" width="71.500" height="43" rx="2.500" fill="#fff65a" stroke="#555"/>
<text class="m" x="920" y="406" textLength="29" lengthAdjust="spacing" style="font-size:9.500px;fill:#443">WHERE</text>
<circle class="p" cx="901" cy="404" r="2.300"/><circle class="p" cx="976" cy="404" r="2.300"/>

<!-- Pl comp -->
<path d="M527 455h22a2 2 0 0 1 2 2v68h-24z" fill="url(#dg)" stroke="#555"/>
<text x="534" y="472" style="font-size:9.500px;fill:#333">Pl</text><text x="534" y="494.500" style="font-size:9.500px;fill:#333">Pt</text><text x="536" y="517" style="font-size:9.500px;fill:#333">I</text>
<circle class="p" cx="553" cy="469" r="2.300"/><circle class="p" cx="553" cy="491" r="2.300"/><circle class="p" cx="553" cy="514" r="2.300"/>

<!-- bottom toolbar -->
<rect x="527" y="523" width="81" height="15.500" fill="url(#cg)" stroke="#666" stroke-width=".8"/>
<rect x="529" y="525" width="12" height="12" fill="#aaa" stroke="#555"/><path d="M535 526.500v6M532.500 530.500l2.500 2.500 2.500-2.500M531 535h8" stroke="#111" stroke-width="1.200" fill="none"/>
<path d="M546 531q5-6 10 0z" fill="#e86020"/><path d="M549 531v5M545 536h10" stroke="#444"/>
<rect x="566" y="528" width="7" height="7" fill="#e8c030" stroke="#555"/><path d="M562 535l4 1M563 537l5 0" stroke="#666"/>
<path d="M578 537c1-6 5-9 10-9" stroke="#777" fill="none" stroke-width="1.500"/><path d="M583 537c1-3 3-5 6-5" stroke="#c44" fill="none"/>
<path d="M594 530h10M594 534h10M597 527v10M601 527v10" stroke="#222" fill="none"/>

<!-- X hex comp -->
<rect x="829.500" y="462.500" width="42.500" height="21.500" rx="3" fill="url(#cg)" stroke="#555"/>
<use href="#hx" transform="translate(850.500 473) scale(1.250)"/>
<path d="M848 470.500l5 5M853 470.500l-5 5" stroke="#eee" stroke-width="2"/>
<circle class="p" cx="827.500" cy="473" r="2.300"/><circle class="p" cx="873" cy="473" r="2.300"/>

<!-- G comp -->
<rect x="959" y="463" width="58" height="37.500" rx="3" fill="url(#cg)" stroke="#555"/>
<text x="965" y="476" style="font-size:9.500px;fill:#333">G</text><text x="966" y="493" style="font-size:9.500px;fill:#333">T</text>
<text x="1001" y="476" style="font-size:9.500px;fill:#333">G</text><text x="1001" y="493" style="font-size:9.500px;fill:#333">X</text>
<path d="M980 489L992 479" stroke="#222" stroke-width="1"/><path d="M981 488l6-7 1 2 3-2-1 3 2 1-6 3z" fill="#f0a820" stroke="#664"/>
<circle cx="979" cy="488.500" r="1.700" fill="#fff" stroke="#444"/><circle cx="992.500" cy="474.500" r="1.700" fill="#fff" stroke="#444"/>
<circle class="p" cx="957.500" cy="473" r="2.300"/><circle class="p" cx="957.500" cy="490" r="2.300"/><circle class="p" cx="1018.500" cy="473" r="2.300"/><circle class="p" cx="1018.500" cy="490" r="2.300"/>

<!-- F y V -->
<rect x="794" y="504" width="54" height="24" rx="3" fill="url(#dg)" stroke="#555"/>
<text x="799" y="519.500" style="font-size:9px;fill:#333">F</text><text x="833" y="519.500" style="font-size:9.500px;fill:#333">V</text>
<path d="M813 522V509M810 512l3-4 3 4" stroke="#111" stroke-width="1.600" fill="none"/><circle cx="813" cy="523" r="1.400" fill="#fff" stroke="#444"/>
<text x="817" y="520" style="font-size:14px;fill:#111;font-family:'Liberation Serif',serif">y</text>
<circle class="p" cx="792" cy="516" r="2.300"/><circle class="p" cx="849.500" cy="516" r="2.300"/>

<!-- V V -->
<rect x="870.500" y="504" width="55.500" height="24" rx="3" fill="url(#dg)" stroke="#555"/>
<text x="876" y="519.500" style="font-size:9.500px;fill:#333">V</text><text x="911" y="519.500" style="font-size:9.500px;fill:#333">V</text>
<path d="M893 522V510M890 513l3-4 3 4" stroke="#8a1414" stroke-width="1.600" fill="none"/><circle cx="893" cy="523" r="1.400" fill="#fff" stroke="#444"/>
<path d="M900 511V524M897 521l3 4 3-4" stroke="#111" stroke-width="1.600" fill="none"/><circle cx="900" cy="509" r="1.400" fill="#fff" stroke="#444"/>
<circle class="p" cx="868.500" cy="516" r="2.300"/><circle class="p" cx="928" cy="516" r="2.300"/>
</svg>
</body></html>
